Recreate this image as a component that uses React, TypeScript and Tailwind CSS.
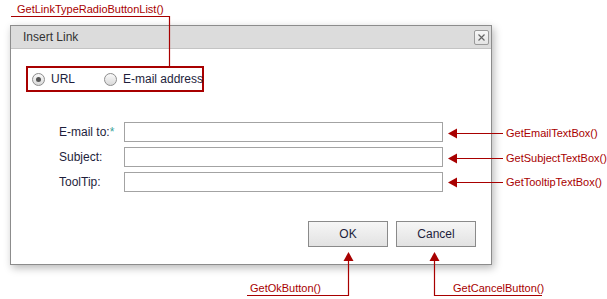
import React from 'react';

const RED = '#a80000';

function Radio({ checked, label }: { checked?: boolean; label: string }) {
  return (
    <label className="flex items-center gap-[6px] whitespace-nowrap text-[12px] text-[#1e1e3c]">
      <span className="flex h-[13px] w-[13px] items-center justify-center rounded-full border border-[#8d8d8d] bg-gradient-to-b from-[#fafafa] to-[#d9d9d9]">
        {checked && <span className="h-[5px] w-[5px] rounded-full bg-[#555]" />}
      </span>
      {label}
    </label>
  );
}

function Field({ label, required }: { label: string; required?: boolean }) {
  return (
    <div className="flex h-[20px] items-center">
      <span className="w-[65px] text-[12px] text-[#1e1e3c]">
        {label}
        {required && <span className="text-[#3aa39a]">*</span>}
      </span>
      <div className="h-[20px] w-[319px] border border-[#a3a3a3] bg-white" />
    </div>
  );
}

function Btn({ children }: { children: React.ReactNode }) {
  return (
    <button className="flex h-[26px] w-[80px] items-center justify-center border border-[#8a8a8a] bg-gradient-to-b from-[#f6f6f6] to-[#e2e2e2] text-[12px] text-[#1e1e3c]">
      {children}
    </button>
  );
}

function Note({ text, className }: { text: string; className: string }) {
  return <span className={`absolute whitespace-nowrap text-[11px] leading-[12px] text-[#a80000] ${className}`}>{text}</span>;
}

export default function App() {
  return (
    <div className="relative h-[299px] w-[607px] overflow-hidden bg-white font-['Liberation_Sans',Arial,sans-serif]">
      <div className="pl-[10px] pt-[25px]">
        <div className="flex h-[240px] w-[482px] flex-col border border-[#8c8c8c] bg-white shadow-[2px_3px_8px_rgba(0,0,0,0.28)]">
          <div className="flex h-[23px] items-center justify-between border-b border-[#c4c4c4] bg-[#dcdcdc] pl-[12px] pr-[2px]">
            <span className="text-[12px] text-[#333]">Insert Link</span>
            <span className="flex h-[15px] w-[15px] items-center justify-center rounded-[2px] border border-[#9a9a9a] bg-gradient-to-b from-[#f7f7f7] to-[#e4e4e4]">
              <svg width="7" height="7" viewBox="0 0 7 7">
                <path d="M0.5 0.5 L6.5 6.5 M6.5 0.5 L0.5 6.5" stroke="#666" strokeWidth="1.2" />
              </svg>
            </span>
          </div>

          <div className="flex flex-1 flex-col">
            <div className="ml-[15px] mt-[17px] flex h-[26px] w-[178px] items-center gap-[29px] border-2 border-[#a80000] pl-[4px]">
              <Radio checked label="URL" />
              <Radio label="E-mail address" />
            </div>

            <div className="ml-[48px] mt-[30px] flex flex-col gap-[5px]">
              <Field label="E-mail to:" required />
              <Field label="Subject:" />
              <Field label="ToolTip:" />
            </div>

            <div className="mr-[15px] mt-[29px] flex justify-end gap-[8px]">
              <Btn>OK</Btn>
              <Btn>Cancel</Btn>
            </div>
          </div>
        </div>
      </div>

      <svg className="pointer-events-none absolute inset-0" width="607" height="299">
        <g stroke={RED} strokeWidth="1.2" fill="none">
          <polyline points="11,16.5 169.5,16.5 169.5,66" />
          <line x1="452" y1="133.5" x2="503" y2="133.5" />
          <line x1="452" y1="158.5" x2="503" y2="158.5" />
          <line x1="452" y1="182.5" x2="503" y2="182.5" />
          <polyline points="348.5,256 348.5,295.5 247,295.5" />
          <polyline points="434.5,256 434.5,295.5 542,295.5" />
        </g>
        <g fill={RED}>
          <polygon points="448,133.5 457,128.5 457,138.5" />
          <polygon points="448,158.5 457,153.5 457,163.5" />
          <polygon points="448,182.5 457,177.5 457,187.5" />
          <polygon points="348.5,252 343.5,261 353.5,261" />
          <polygon points="434.5,252 429.5,261 439.5,261" />
        </g>
      </svg>

      <Note text="GetLinkTypeRadioButtonList()" className="left-[17px] top-[3px]" />
      <Note text="GetEmailTextBox()" className="left-[506px] top-[127px]" />
      <Note text="GetSubjectTextBox()" className="left-[506px] top-[152px]" />
      <Note text="GetTooltipTextBox()" className="left-[506px] top-[176px]" />
      <Note text="GetOkButton()" className="left-[250px] top-[282px]" />
      <Note text="GetCancelButton()" className="left-[453px] top-[282px]" />
    </div>
  );
}
